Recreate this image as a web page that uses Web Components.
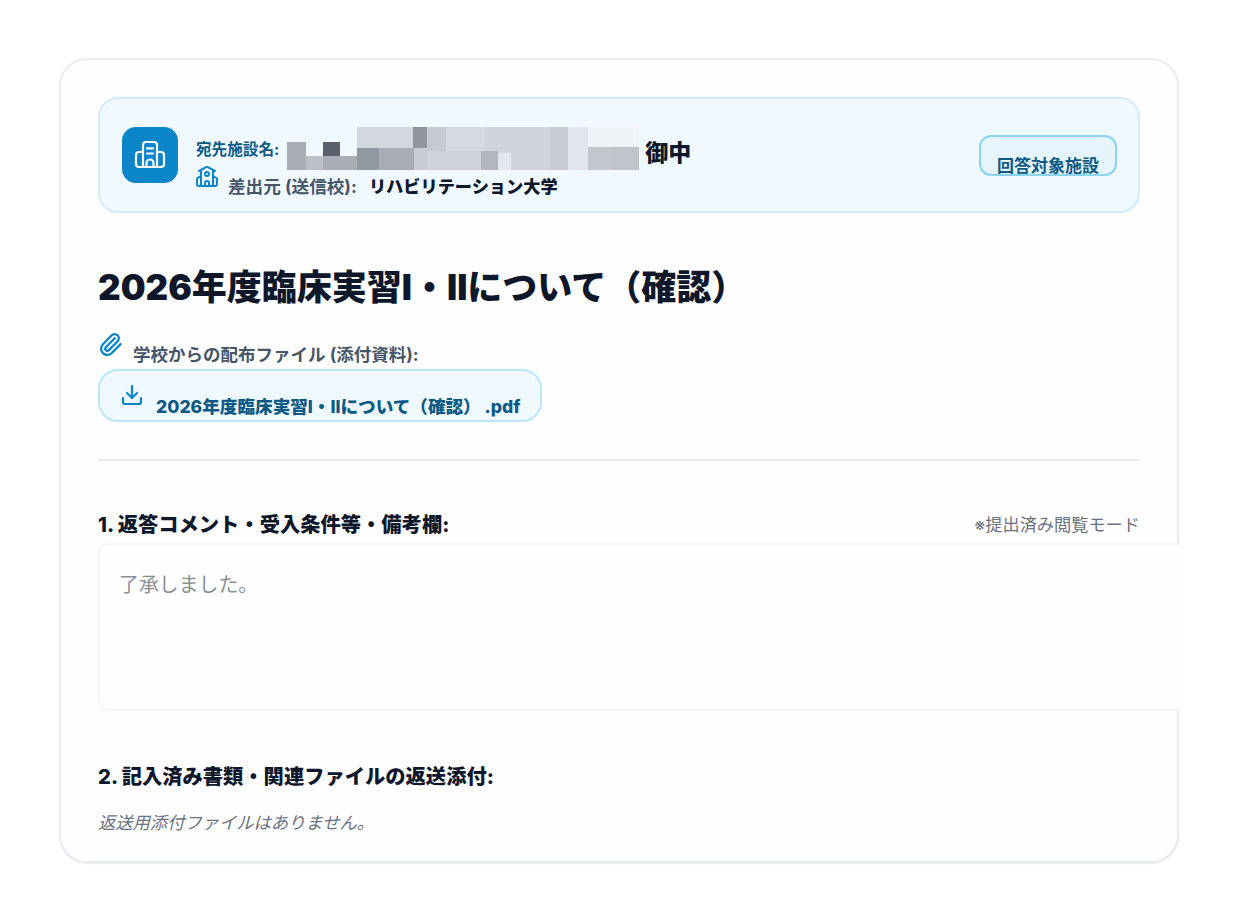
<!DOCTYPE html>
<html lang="ja">
<head>
<meta charset="utf-8">
<title>回答</title>
<style>
  html, body { margin: 0; background: #fff; }
  body {
    font-family: Inter, "Noto Sans CJK JP", sans-serif;
    overflow: hidden;
    height: 911px;
  }
</style>
</head>
<body>
<reply-card>
  <facility-banner></facility-banner>
  <h-title>2026年度臨床実習I・IIについて（確認）</h-title>
  <attach-list></attach-list>
  <reply-section></reply-section>
</reply-card>

<script>
// カード本体
class ReplyCard extends HTMLElement {
  constructor() {
    super();
    this.attachShadow({ mode: "open" }).innerHTML = `
      <style>
        :host {
          display: block;
          box-sizing: border-box;
          width: 1120px;
          height: 805px;
          margin: 58px 0 0 59px;
          padding: 37px 37px 0 37px;
          background: #fefeff;
          border: 2px solid #e8ebf2;
          border-radius: 28px;
          box-shadow: 0 1px 1px #e4ebf2;
        }
      </style>
      <slot></slot>`;
  }
}

// 宛先バナー
class FacilityBanner extends HTMLElement {
  constructor() {
    super();
    this.attachShadow({ mode: "open" }).innerHTML = `
      <style>
        :host {
          display: flex;
          align-items: center;
          box-sizing: border-box;
          height: 116px;
          padding: 0 21px 0 22px;
          background: #f0f9ff;
          border: 2px solid #d2ecfa;
          border-radius: 20px;
        }
        .tile {
          flex: none;
          width: 56px; height: 56px;
          display: flex; align-items: center; justify-content: center;
          background: #0a85c9;
          border-radius: 14px;
        }
        .info { flex: 1; align-self: flex-start; margin: 28px 0 0 18px; }
        .to { display: flex; align-items: center; height: 43px; color: #0c5a84; font-size: 15.6px; font-weight: 700; line-height: 22px; }
        .to em { font-style: normal; margin-top: 2px; }
        .to svg { margin-left: 8px; }
        .to b { margin: 8px 0 0 6px; color: #0f172a; font-size: 23px; font-weight: 800; line-height: 26px; }
        .from { display: flex; align-items: flex-start; height: 28px; margin-top: -5px; }
        .from svg { margin-left: -1px; }
        .line { display: flex; align-items: baseline; margin: 9px 0 0 9px; color: #475569; font-size: 17.6px; font-weight: 700; line-height: 26px; }
        .line b { margin-left: 12px; color: #0f172a; font-size: 17.2px; font-weight: 800; }
        .badge {
          box-sizing: border-box;
          width: 138px; height: 41px;
          text-align: center;
          color: #0c5a84;
          font-size: 17px;
          font-weight: 700;
          line-height: 58px;
          white-space: nowrap;
          background: #e6f4fd;
          border: 2px solid #8bd3ee;
          border-radius: 12px;
        }
      </style>
      <div class="tile">
        <svg width="32" height="32" viewBox="0 0 32 32" fill="none" stroke="#fff" stroke-width="2.2" stroke-linecap="round" stroke-linejoin="round">
          <path d="M9 28V6a3 3 0 0 1 3-3h8a3 3 0 0 1 3 3v22"/>
          <path d="M9 13H5a3 3 0 0 0-3 3v9a3 3 0 0 0 3 3h22a3 3 0 0 0 3-3v-9a3 3 0 0 0-3-3h-4"/>
          <path d="M13 9.3h6M13 14.5h6M12.5 28v-4a3.5 3.5 0 0 1 7 0v4"/>
        </svg>
      </div>
      <div class="info">
        <div class="to"><em>宛先施設名:</em>
          <svg width="352" height="43" viewBox="0 0 352 43" shape-rendering="crispEdges">
            <rect x="0" y="15" width="19" height="28" fill="#a9adb5"/>
            <rect x="19" y="29" width="17" height="14" fill="#bcc0c6"/>
            <rect x="36" y="15" width="17" height="14" fill="#5c606e"/>
            <rect x="36" y="29" width="34" height="14" fill="#a9adb4"/>
            <rect x="70" y="0" width="56" height="21" fill="#d3d8df"/>
            <rect x="126" y="0" width="14" height="21" fill="#8f96a0"/>
            <rect x="140" y="0" width="19" height="24" fill="#c5cad1"/>
            <rect x="159" y="0" width="39" height="24" fill="#d5dae1"/>
            <rect x="198" y="0" width="65" height="43" fill="#d0d5dc"/>
            <rect x="263" y="0" width="18" height="43" fill="#c8cdd4"/>
            <rect x="281" y="0" width="20" height="43" fill="#e2e6ec"/>
            <rect x="301" y="0" width="51" height="20" fill="#eff3f8"/>
            <rect x="70" y="21" width="22" height="22" fill="#9298a1"/>
            <rect x="92" y="21" width="35" height="22" fill="#a8adb5"/>
            <rect x="127" y="21" width="13" height="22" fill="#c8cdd4"/>
            <rect x="140" y="24" width="54" height="19" fill="#ced3da"/>
            <rect x="194" y="24" width="17" height="19" fill="#b2b6bd"/>
            <rect x="211" y="26" width="13" height="17" fill="#e3e8ee"/>
            <rect x="301" y="20" width="24" height="23" fill="#c2c7ce"/>
            <rect x="325" y="20" width="27" height="23" fill="#bfc4cb"/>
          </svg>
          <b>御中</b>
        </div>
        <div class="from">
          <svg width="24" height="24" viewBox="0 0 24 24" fill="none" stroke="#0a85c9" stroke-width="2" stroke-linecap="round" stroke-linejoin="round">
            <path d="M14 21v-3a2 2 0 0 0-4 0v3"/>
            <path d="M18 5v16"/>
            <path d="m4 6 7.106-3.79a2 2 0 0 1 1.788 0L20 6"/>
            <path d="m6 11-3.52 2.147a1 1 0 0 0-.48.854V19a2 2 0 0 0 2 2h16a2 2 0 0 0 2-2v-5a1 1 0 0 0-.48-.853L18 11"/>
            <path d="M6 5v16"/>
            <circle cx="12" cy="9" r="2"/>
          </svg>
          <div class="line"><span>差出元 (送信校):</span><b>リハビリテーション大学</b></div>
        </div>
      </div>
      <div class="badge">回答対象施設</div>`;
  }
}

// タイトル
class HTitle extends HTMLElement {
  constructor() {
    super();
    this.attachShadow({ mode: "open" }).innerHTML = `
      <style>
        :host {
          display: block;
          margin-top: 52px;
          color: #0f172a;
          font-size: 35px;
          font-weight: 900;
          line-height: 44px;
          white-space: nowrap;
        }
      </style>
      <slot></slot>`;
  }
}

// 配布ファイル
class AttachList extends HTMLElement {
  constructor() {
    super();
    this.attachShadow({ mode: "open" }).innerHTML = `
      <style>
        :host { display: block; margin-top: 22px; padding-bottom: 37px; border-bottom: 2px solid #e8eaee; }
        .label { display: flex; align-items: flex-start; height: 38px; color: #475569; font-size: 17.5px; font-weight: 700; line-height: 24px; }
        .label svg { margin-top: 1px; }
        .label span { margin: 12px 0 0 10px; }
        .file {
          display: inline-flex;
          box-sizing: border-box;
          height: 53px;
          padding: 0 20px;
          color: #0c5a84;
          font-size: 17.6px;
          font-weight: 800;
          line-height: 26px;
          background: #f0f9ff;
          border: 2px solid #bae6fd;
          border-radius: 20px;
        }
        .file svg { margin-top: 12px; }
        .file span { margin: 23px 0 0 12px; white-space: pre; }
      </style>
      <div class="label">
        <svg width="25" height="25" viewBox="0 0 24 24" fill="none" stroke="#0a85c9" stroke-width="2.2" stroke-linecap="round" stroke-linejoin="round">
          <path d="m16 6-8.414 8.586a2 2 0 0 0 2.829 2.829l8.414-8.586a4 4 0 1 0-5.657-5.657l-8.379 8.551a6 6 0 1 0 8.485 8.485l8.379-8.551"/>
        </svg>
        <span>学校からの配布ファイル (添付資料):</span>
      </div>
      <div class="file">
        <svg width="24" height="24" viewBox="0 0 24 24" fill="none" stroke="#0a85c9" stroke-width="2.2" stroke-linecap="round" stroke-linejoin="round">
          <path d="M12 15V3"/>
          <path d="M21 15v4a2 2 0 0 1-2 2H5a2 2 0 0 1-2-2v-4"/>
          <path d="m7 10 5 5 5-5"/>
        </svg>
        <span>2026年度臨床実習I・IIについて（確認） .pdf</span>
      </div>`;
  }
}

// 返答欄
class ReplySection extends HTMLElement {
  constructor() {
    super();
    this.attachShadow({ mode: "open" }).innerHTML = `
      <style>
        :host { display: block; padding-top: 49px; }
        .head { display: flex; justify-content: space-between; align-items: center; height: 30px; }
        .head b { color: #0f172a; font-size: 20.3px; font-weight: 800; line-height: 28px; }
        .head span { color: #6b7280; font-size: 17.2px; line-height: 24px; }
        .box {
          box-sizing: border-box;
          width: 1083px;
          height: 168px;
          margin-top: 3px;
          padding: 25px 19px;
          color: #8b8f96;
          font-size: 19.9px;
          line-height: 30px;
          background: #fefefe;
          border: 2px solid #f4f5f8;
          border-right: 0;
          border-radius: 10px 0 0 10px;
        }
        .second { margin-top: 51px; }
        .note { margin-top: 18px; color: #6b7280; font-size: 17.3px; font-style: italic; line-height: 26px; }
      </style>
      <div class="head"><b>1. 返答コメント・受入条件等・備考欄:</b><span>※提出済み閲覧モード</span></div>
      <div class="box">了承しました。</div>
      <div class="head second"><b>2. 記入済み書類・関連ファイルの返送添付:</b></div>
      <div class="note">返送用添付ファイルはありません。</div>`;
  }
}

customElements.define("reply-card", ReplyCard);
customElements.define("facility-banner", FacilityBanner);
customElements.define("h-title", HTitle);
customElements.define("attach-list", AttachList);
customElements.define("reply-section", ReplySection);
</script>
</body>
</html>
